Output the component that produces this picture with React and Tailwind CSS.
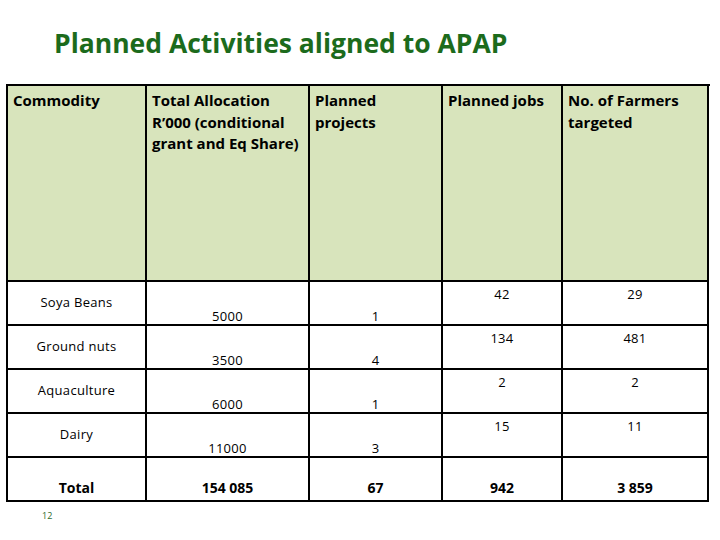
import React from 'react';

const rows = [
  { name: 'Soya Beans', alloc: '5000', projects: '1', jobs: '42', farmers: '29' },
  { name: 'Ground nuts', alloc: '3500', projects: '4', jobs: '134', farmers: '481' },
  { name: 'Aquaculture', alloc: '6000', projects: '1', jobs: '2', farmers: '2' },
  { name: 'Dairy', alloc: '11000', projects: '3', jobs: '15', farmers: '11' },
];

const cell = 'border-r-2 border-b-2 border-black';
const head = 'border-r-2 border-b-2 border-black h-[196px] bg-[#d8e4bc] px-[5px] pt-[4px] text-[15px] leading-[21.5px] font-bold';

export default function App() {
  return (
    <div className="w-[720px] h-[540px] bg-white overflow-hidden font-['Open_Sans',sans-serif] text-black">
      <h1 className="ml-[54px] pt-[27px] text-[26.5px] leading-[32px] font-bold text-[#1c6b1c]">
        Planned Activities aligned to APAP
      </h1>

      <div className="ml-[6px] mt-[25px] w-[704px] border-l-2 border-t-2 border-black grid grid-cols-[139px_163px_133px_120px_146px]">
        {/* header */}
        <div className={head}>Commodity</div>
        <div className={head}>Total Allocation R’000 (conditional grant and Eq Share)</div>
        <div className={head}>Planned projects</div>
        <div className={head}>Planned jobs</div>
        <div className={head}>No. of Farmers targeted</div>

        {rows.map((r) => (
          <React.Fragment key={r.name}>
            <div className={`${cell} h-[44px] flex items-center justify-center text-[13px] tracking-[0.3px]`}>{r.name}</div>
            <div className={`${cell} h-[44px] flex items-end justify-center pb-[1px] text-[13px] leading-[14px] tracking-[0.3px]`}>{r.alloc}</div>
            <div className={`${cell} h-[44px] flex items-end justify-center pb-[1px] text-[13px] leading-[14px]`}>{r.projects}</div>
            <div className={`${cell} h-[44px] flex items-start justify-center pt-[3px] text-[13px] tracking-[0.3px]`}>{r.jobs}</div>
            <div className={`${cell} h-[44px] flex items-start justify-center pt-[3px] text-[13px] tracking-[0.3px]`}>{r.farmers}</div>
          </React.Fragment>
        ))}

        {['Total', '154 085', '67', '942', '3 859'].map((t) => (
          <div key={t} className={`${cell} h-[44px] flex items-end justify-center pb-[2px] text-[14px] font-bold`}>{t}</div>
        ))}
      </div>

      <div className="ml-[42px] mt-[8px] text-[9px] leading-[12px] text-[#2e6b2e]">12</div>
    </div>
  );
}
